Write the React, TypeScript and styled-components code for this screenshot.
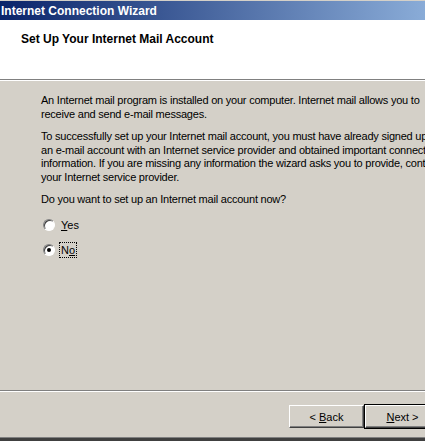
import React from "react"
import styled, { createGlobalStyle } from "styled-components"

const Global = createGlobalStyle`
  html, body { margin: 0; padding: 0; background: #d4d0c8; }
  body { font-family: "Liberation Sans", Arial, sans-serif; font-size: 11px; color: #000; }
`

const Win = styled.div`
  width: 425px;
  height: 441px;
  overflow: hidden;
  display: flex;
  flex-direction: column;
  background: #d4d0c8;
  border-top: 1px solid #d4d0c8;
  box-sizing: border-box;
`

const TitleBar = styled.div`
  height: 19px;
  flex: none;
  display: flex;
  align-items: center;
  padding-left: 1px;
  background: linear-gradient(to right, #0a246a 0px, #a6caf0 520px);
  color: #fff;
  font-weight: bold;
  font-size: 12px;
  white-space: nowrap;
`

const Header = styled.div`
  height: 59px;
  flex: none;
  background: #fff;
  padding: 12px 0 0 21px;
  box-sizing: border-box;
  font-weight: bold;
  font-size: 12px;
`

const Etched = styled.div`
  flex: none;
  height: 0;
  border-top: 1px solid #808080;
  border-bottom: 1px solid #fff;
`

// text runs past the right edge like the original (window is wider than the shot)
const Body = styled.div`
  flex: 1;
  padding: 13px 0 0 41px;
  white-space: nowrap;
  letter-spacing: -0.22px;
`

const Para = styled.p`
  margin: 0 0 9px 0;
  line-height: 13.6px;
`

const Question = styled(Para)`
  margin-top: -1px;
  margin-bottom: 11px;
`

const Option = styled.label`
  display: flex;
  align-items: center;
  height: 15px;
  margin-bottom: 10px;
  margin-left: 2px;
`

const Radio = styled.span<{ on?: boolean }>`
  width: 12px;
  height: 12px;
  box-sizing: border-box;
  border-radius: 50%;
  background: #fff;
  border: 1px solid;
  border-color: #808080 #fff #fff #808080;
  box-shadow: inset 1px 1px 0 #404040;
  display: flex;
  align-items: center;
  justify-content: center;
  margin-right: 4px;
  &::after {
    content: "";
    width: 4px;
    height: 4px;
    border-radius: 50%;
    background: ${(p) => (p.on ? "#000" : "transparent")};
  }
`

const OptText = styled.span<{ focus?: boolean }>`
  padding: 1px 1px;
  border: 1px dotted ${(p) => (p.focus ? "#000" : "transparent")};
  line-height: 12px;
  letter-spacing: 0;
`

const Footer = styled.div`
  flex: none;
  height: 45px;
  display: flex;
  justify-content: flex-end;
  align-items: flex-start;
  padding-top: 13px;
  box-sizing: border-box;
  margin-right: -16px;
`

const Btn = styled.button<{ primary?: boolean }>`
  width: 75px;
  height: 23px;
  margin-right: 1px;
  font-family: "Liberation Sans", Arial, sans-serif;
  font-size: 11px;
  color: #000;
  background: #d4d0c8;
  border: 1px solid;
  border-color: #fff #404040 #404040 #fff;
  box-shadow: inset -1px -1px 0 #808080;
  padding: 0;
  outline: ${(p) => (p.primary ? "1px solid #000" : "none")};
  outline-offset: 0;
`

const BottomEdge = styled.div`
  flex: none;
  height: 3px;
  border-top: 1px solid #808080;
  background: #404040;
`

export default function App() {
  return (
    <>
      <Global />
      <Win>
        <TitleBar>Internet Connection Wizard</TitleBar>
        <Header>Set Up Your Internet Mail Account</Header>
        <Etched />
        <Body>
          <Para>
            An Internet mail program is installed on your computer. Internet mail allows you to
            <br />
            receive and send e-mail messages.
          </Para>
          <Para>
            To successfully set up your Internet mail account, you must have already signed up for
            <br />
            an e-mail account with an Internet service provider and obtained important connection
            <br />
            information. If you are missing any information the wizard asks you to provide, contact
            <br />
            your Internet service provider.
          </Para>
          <Question>Do you want to set up an Internet mail account now?</Question>
          <Option>
            <Radio />
            <OptText>
              <u>Y</u>es
            </OptText>
          </Option>
          <Option>
            <Radio on />
            <OptText focus>
              N<u>o</u>
            </OptText>
          </Option>
        </Body>
        <Etched />
        <Footer>
          <Btn>
            &lt; <u>B</u>ack
          </Btn>
          <Btn primary>
            <u>N</u>ext &gt;
          </Btn>
        </Footer>
        <BottomEdge />
      </Win>
    </>
  )
}
